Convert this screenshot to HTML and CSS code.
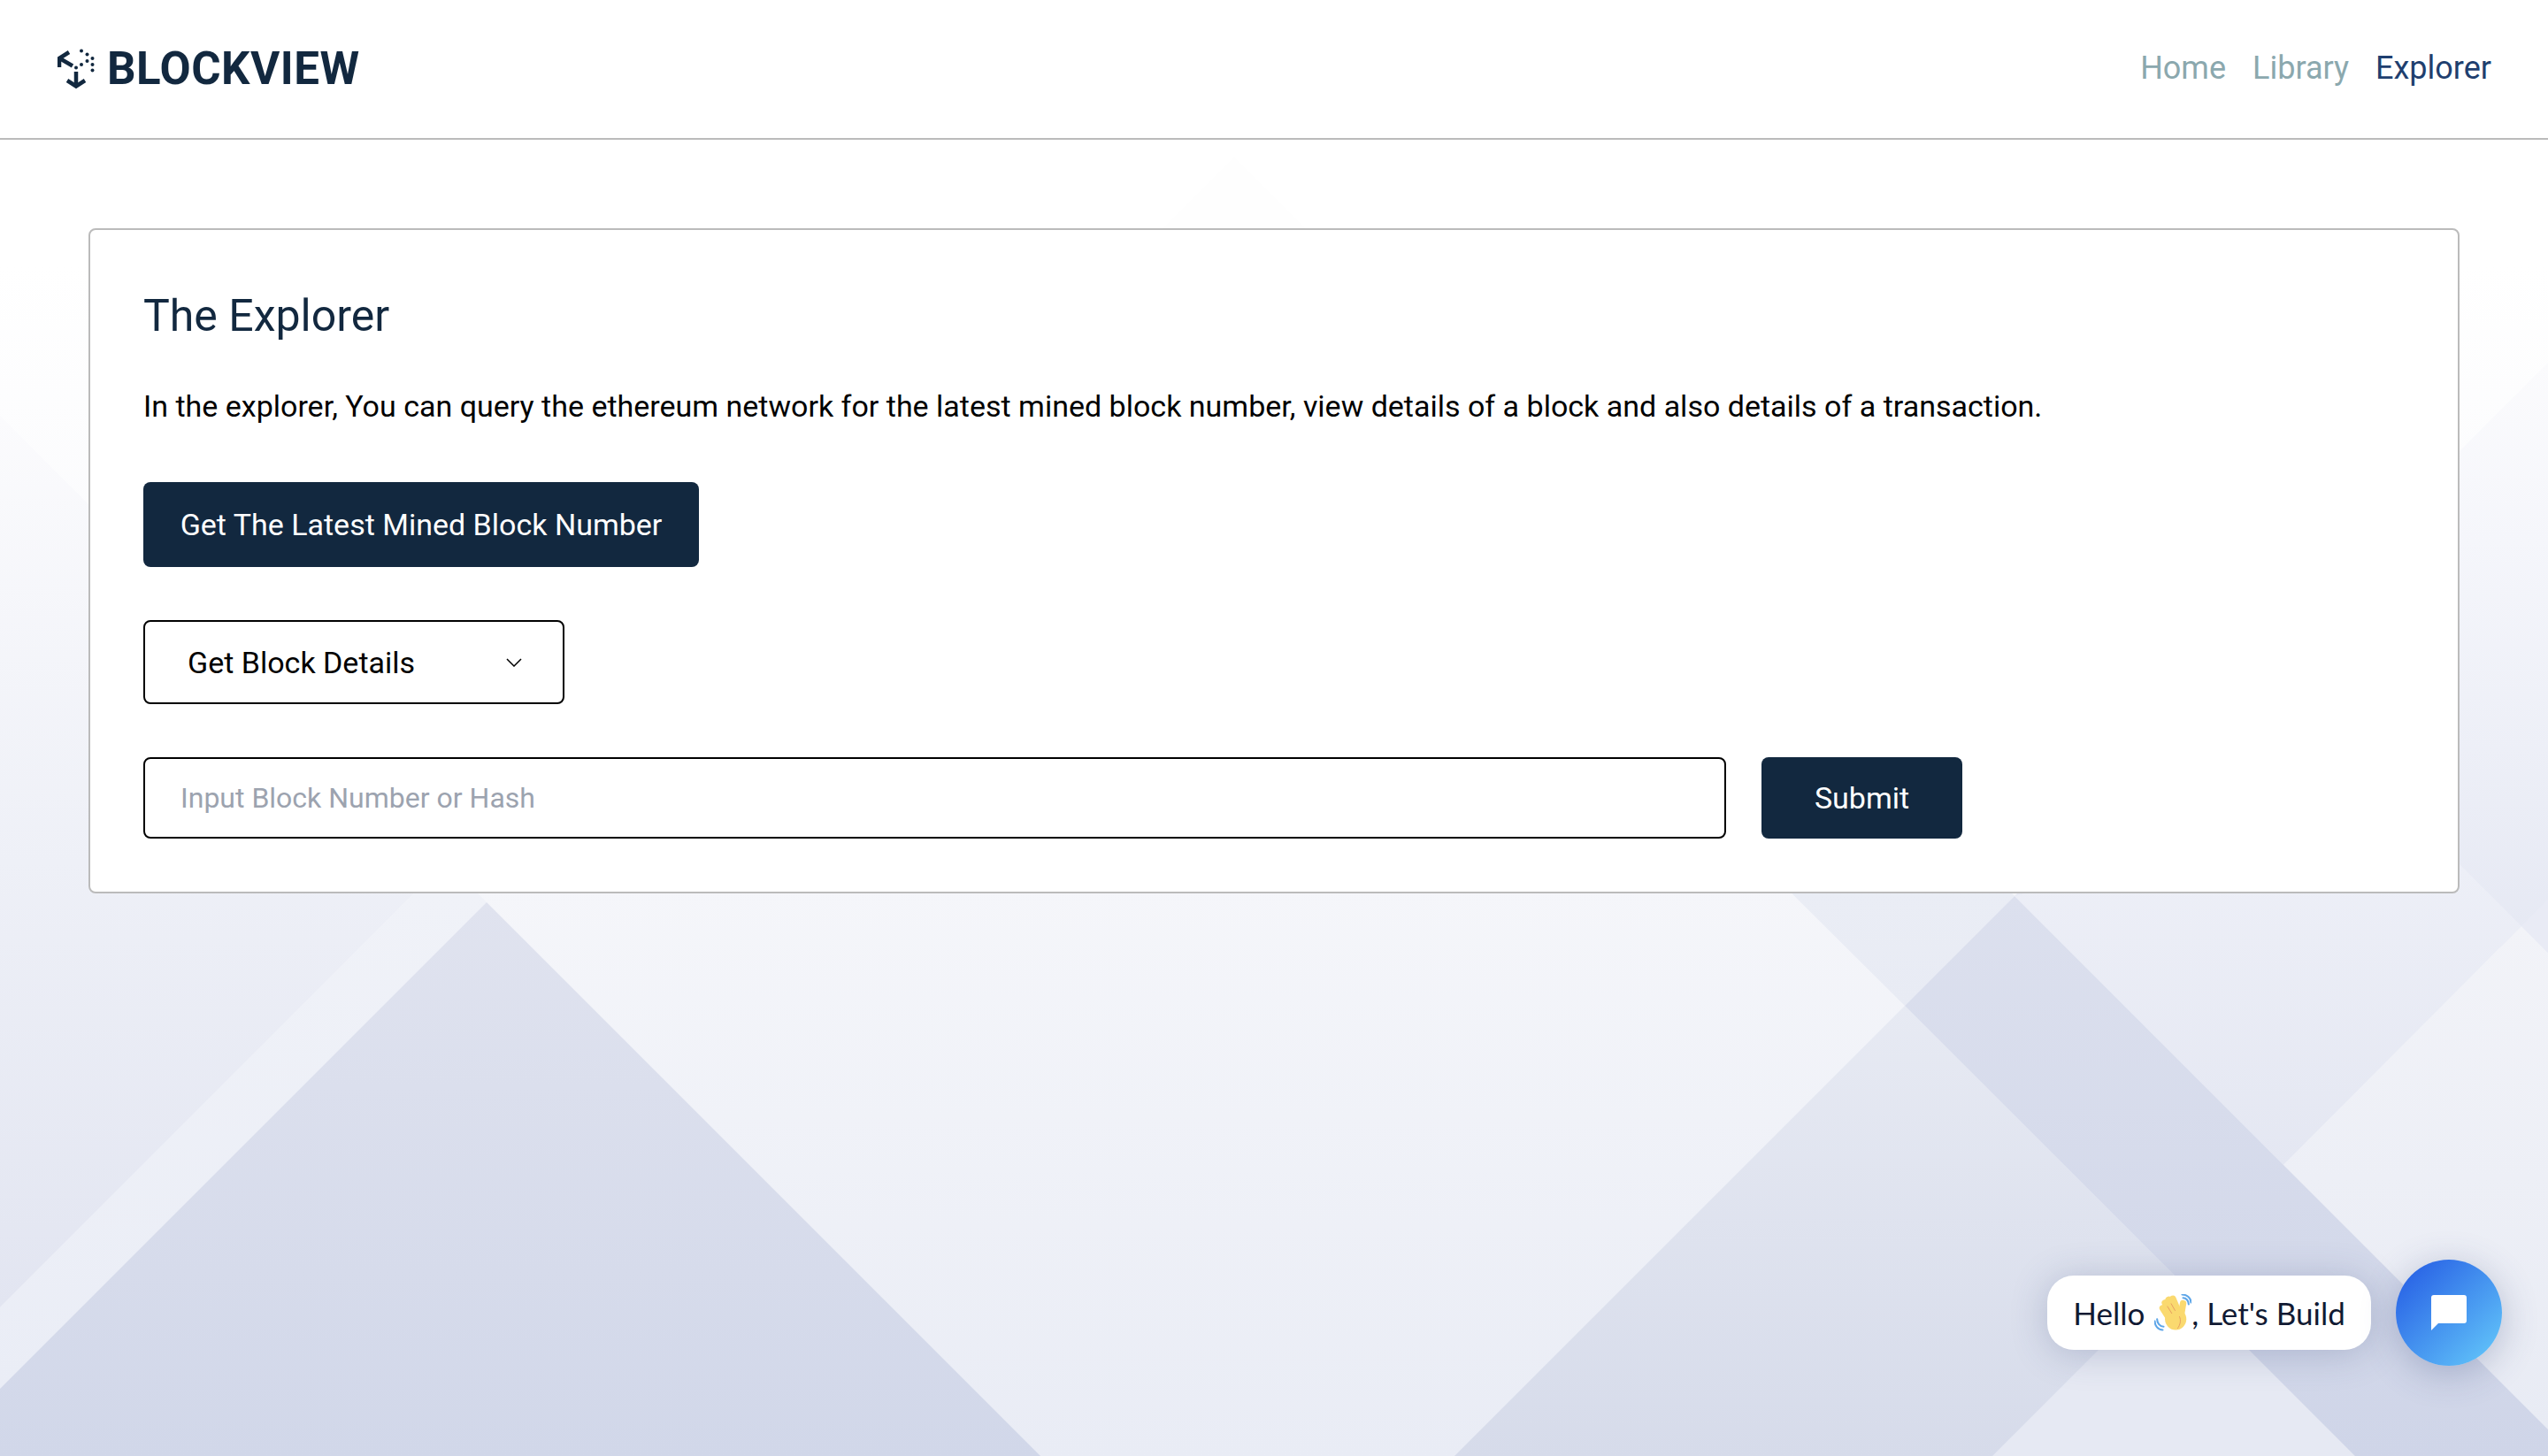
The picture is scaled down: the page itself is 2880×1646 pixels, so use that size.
FILE: index.html
```html
<!DOCTYPE html>
<html lang="en">
<head>
<meta charset="utf-8">
<title>Blockview</title>
<link rel="stylesheet" href="styles.css">
</head>
<body>
<svg class="backdrop" viewBox="0 0 2880 1646" preserveAspectRatio="none" aria-hidden="true">
  <defs>
    <linearGradient id="base" gradientUnits="userSpaceOnUse" x1="0" y1="300" x2="0" y2="1646"><stop offset="0" stop-color="#ffffff"/><stop offset="0.52" stop-color="#f5f6fa"/><stop offset="1" stop-color="#e9ecf5"/></linearGradient>
    <linearGradient id="leftMed" gradientUnits="userSpaceOnUse" x1="0" y1="470" x2="0" y2="1478"><stop offset="0" stop-color="#fbfbfd"/><stop offset="0.5" stop-color="#eef0f7"/><stop offset="1" stop-color="#e2e5f1"/></linearGradient>
    <linearGradient id="leftDark" gradientUnits="userSpaceOnUse" x1="0" y1="1020" x2="0" y2="1646"><stop offset="0" stop-color="#e0e3ef"/><stop offset="1" stop-color="#d1d7e9"/></linearGradient>
    <linearGradient id="strip" gradientUnits="userSpaceOnUse" x1="0" y1="1010" x2="0" y2="1570"><stop offset="0" stop-color="#f0f2f8"/><stop offset="1" stop-color="#eaedf6"/></linearGradient>
    <linearGradient id="rMed" gradientUnits="userSpaceOnUse" x1="0" y1="1137" x2="0" y2="1646"><stop offset="0" stop-color="#e7eaf3"/><stop offset="1" stop-color="#d6dbea"/></linearGradient>
    <linearGradient id="rBand" gradientUnits="userSpaceOnUse" x1="0" y1="1013" x2="0" y2="1646"><stop offset="0" stop-color="#dce0ee"/><stop offset="1" stop-color="#cfd5e8"/></linearGradient>
    <linearGradient id="rBandTop" gradientUnits="userSpaceOnUse" x1="0" y1="1010" x2="0" y2="1137"><stop offset="0" stop-color="#eaedf5"/><stop offset="1" stop-color="#e8ebf4"/></linearGradient>
    <linearGradient id="rUpper" gradientUnits="userSpaceOnUse" x1="0" y1="410" x2="0" y2="1080"><stop offset="0" stop-color="#fbfbfd"/><stop offset="0.3" stop-color="#f5f6fb"/><stop offset="1" stop-color="#e5e8f3"/></linearGradient>
    <linearGradient id="rMid" gradientUnits="userSpaceOnUse" x1="0" y1="980" x2="0" y2="1320"><stop offset="0" stop-color="#edeff7"/><stop offset="1" stop-color="#e4e7f2"/></linearGradient>
    <linearGradient id="rLight" gradientUnits="userSpaceOnUse" x1="0" y1="1048" x2="0" y2="1616"><stop offset="0" stop-color="#f2f3f8"/><stop offset="1" stop-color="#e8ebf4"/></linearGradient>
  </defs>
  <rect width="2880" height="1646" fill="url(#base)"/>
  <polygon fill="#fefefe" points="1315,258 1395,178 1475,258"/>
  <polygon fill="url(#leftMed)" points="0,470 504,974 0,1478"/>
  <polygon fill="url(#strip)" points="504,974 550,1020 0,1570 0,1478"/>
  <polygon fill="url(#leftDark)" points="550,1020 1176,1646 0,1646 0,1570"/>
  <polygon fill="url(#rUpper)" points="2880,410 2880,1077 2277,1013"/>
  <polygon fill="url(#rMid)" points="2277,1013 2700,897 2880,1077 2850,1047 2581,1317"/>
  <polygon fill="url(#rLight)" points="2850,1047 2880,1077 2880,1616 2581,1317"/>
  <polygon fill="#e9ebf5" points="2850,1047 2880,1017 2880,1077"/>
  <polygon fill="url(#rBandTop)" points="1985,970 2237,970 2277,1013 2153,1137"/>
  <polygon fill="url(#rMed)" points="2153,1137 2662,1646 1644,1646"/>
  <polygon fill="#e6e9f3" points="2457,1441 2662,1646 2252,1646"/>
  <polygon fill="url(#rBand)" points="2277,1013 2880,1616 2880,1646 2662,1646 2153,1137"/>
</svg>

<header class="topbar">
  <a class="brand" href="#">
    <svg class="brand-mark" viewBox="0 0 44 46" aria-hidden="true">
      <g class="mark-lines">
        <path d="M13 4 L2 11 L2 21"/>
        <path d="M2.5 11 L17 19.500"/>
        <path d="M21 26 V42"/>
        <path d="M11 36 L21 42.500 L31 36"/>
      </g>
      <g class="mark-dots">
        <circle cx="21" cy="21.500" r="2"/>
        <circle cx="27" cy="18" r="2"/>
        <circle cx="33.500" cy="14" r="2"/>
        <circle cx="39.500" cy="18" r="2"/>
        <circle cx="39.500" cy="24.500" r="2"/>
        <circle cx="27" cy="2.500" r="2"/>
        <circle cx="33.500" cy="6.500" r="2"/>
        <circle cx="39.500" cy="11" r="2"/>
      </g>
    </svg>
    <span class="brand-name">BLOCKVIEW</span>
  </a>
  <nav class="nav">
    <a class="nav-link" href="#">Home</a>
    <a class="nav-link" href="#">Library</a>
    <a class="nav-link is-active" href="#">Explorer</a>
  </nav>
</header>

<main class="page">
  <section class="card">
    <h1 class="title">The Explorer</h1>
    <p class="lead">In the explorer, You can query the ethereum network for the latest mined block number, view details of a block and also details of a transaction.</p>
    <button class="btn btn-wide" type="button">Get The Latest Mined Block Number</button>
    <button class="select" type="button">
      <span>Get Block Details</span>
      <svg class="chevron" viewBox="0 0 18 10" aria-hidden="true"><path d="M1 1 L9 9 L17 1"/></svg>
    </button>
    <form class="query">
      <input class="field" type="text" placeholder="Input Block Number or Hash">
      <button class="btn btn-submit" type="button">Submit</button>
    </form>
  </section>
</main>

<aside class="chat">
  <div class="bubble"><span>Hello</span><svg class="wave" viewBox="0 0 40 40" aria-hidden="true">
      <g class="wave-lines">
        <path d="M31 4 C34 4 37 7 37 11"/>
        <path d="M30 0.500 C35 0.500 39.500 4 39.500 9"/>
        <path d="M3 27 C3 31 6 35 10 35"/>
        <path d="M0.500 29 C0.500 34 4 38.500 9 38.500"/>
      </g>
      <g class="wave-hand">
        <path d="M9 15 L16 26"/>
        <path d="M11.500 9.500 L19 22"/>
        <path d="M15.500 6 L22 19"/>
        <path d="M20 5 L25.500 18"/>
        <path d="M31 10 L29 22"/>
        <ellipse cx="23" cy="27" rx="11.500" ry="11.500"/>
      </g>
      <g class="wave-creases">
        <path d="M14 13 L19 21"/>
        <path d="M18 10 L22.500 18"/>
        <path d="M27 24 C29 28 28 33 25 37"/>
      </g>
    </svg><span>, Let's Build</span></div>
  <button class="chat-btn" type="button" aria-label="Open chat">
    <svg class="chat-icon" viewBox="0 0 40 40" aria-hidden="true"><path d="M3 0 H37 A3 3 0 0 1 40 3 V29 A3 3 0 0 1 37 32 H8 L0 40 V3 A3 3 0 0 1 3 0 Z"/></svg>
  </button>
</aside>
</body>
</html>
```
FILE: styles.css
```css
* { box-sizing: border-box; }
html, body { margin: 0; padding: 0; }
body {
  min-height: 1646px;
  font-family: Roboto, "Liberation Sans", sans-serif;
  color: #000;
  position: relative;
  overflow: hidden;
}
.backdrop {
  position: absolute;
  top: 0;
  left: 0;
  width: 2880px;
  height: 1646px;
  z-index: -1;
}
.topbar {
  height: 158px;
  background: #fff;
  border-bottom: 2px solid #bbbbbb;
  display: flex;
  align-items: center;
  justify-content: space-between;
  padding: 0 64px 0 65px;
}
.brand {
  display: flex;
  align-items: center;
  gap: 12px;
  text-decoration: none;
}
.brand-mark { width: 44px; height: 46px; }
.mark-lines { fill: none; stroke: #12283f; stroke-width: 4.500; }
.mark-dots { fill: #12283f; }
.brand-name {
  font-size: 51px;
  font-weight: 700;
  line-height: 60px;
  color: #12283f;
  letter-spacing: 0.5px;
}
.nav { display: flex; gap: 30px; margin-bottom: 3px; }
.nav-link {
  font-size: 36px;
  line-height: 44px;
  color: #8ba8ae;
  text-decoration: none;
}
.nav-link.is-active { color: #1f3f6f; }
.page { padding: 100px 100px 0; }
.card {
  background: #fff;
  border: 2px solid #bbbbbb;
  border-radius: 8px;
  height: 752px;
  padding: 60px;
}
.title {
  margin: 5px 0 0;
  font-size: 50px;
  line-height: 64px;
  font-weight: 400;
  color: #12283f;
}
.lead {
  margin: 48px 0 0;
  font-size: 34px;
  line-height: 44px;
}
.btn {
  font-family: inherit;
  font-size: 34px;
  color: #fff;
  background: #12283f;
  border: 0;
  border-radius: 8px;
}
.btn-wide {
  display: block;
  margin-top: 64px;
  width: 628px;
  height: 96px;
}
.select {
  display: flex;
  align-items: center;
  justify-content: space-between;
  margin-top: 60px;
  width: 476px;
  height: 95px;
  padding: 0 46px 0 48px;
  background: #fff;
  border: 2px solid #000;
  border-radius: 8px;
  font-family: inherit;
  font-size: 34px;
  color: #000;
}
.chevron { width: 18px; height: 10px; }
.chevron path { fill: none; stroke: #000; stroke-width: 1.500; }
.query { display: flex; gap: 40px; margin-top: 60px; }
.field {
  width: 1789px;
  height: 92px;
  padding: 0 40px;
  border: 2px solid #000;
  border-radius: 8px;
  font-family: inherit;
  font-size: 32px;
  background: #fff;
  outline: 0;
}
.field::placeholder { color: #9ca3af; opacity: 1; }
.btn-submit { width: 227px; height: 92px; }
.chat {
  position: absolute;
  left: 2314px;
  top: 1424px;
  display: flex;
  align-items: center;
  gap: 28px;
}
.bubble {
  width: 366px;
  height: 84px;
  display: flex;
  align-items: center;
  justify-content: center;
  background: #fff;
  border-radius: 30px;
  font-family: Lato, "Noto Sans", sans-serif;
  font-size: 35px;
  color: #111a33;
  white-space: pre;
  box-shadow: 0 4px 40px rgba(60, 75, 125, 0.25);
}
.wave { width: 42px; height: 42px; flex: none; margin: 0 0 0 11px; }
.wave-lines { fill: none; stroke: #5ea6e8; stroke-width: 2; stroke-linecap: round; }
.wave-hand path { fill: none; stroke: #fad96f; stroke-width: 7; stroke-linecap: round; }
.wave-hand ellipse { fill: #fad96f; }
.wave-creases { fill: none; stroke: #e59a60; stroke-width: 0.900; }
.chat-btn {
  width: 120px;
  height: 120px;
  flex: none;
  padding: 0;
  border: 0;
  border-radius: 50%;
  display: flex;
  align-items: center;
  justify-content: center;
  background: linear-gradient(135deg, #2257e3 0%, #66ccfb 100%);
  box-shadow: 0 8px 40px rgba(60, 75, 125, 0.3);
}
.chat-icon { width: 40px; height: 40px; fill: #fff; }
```
